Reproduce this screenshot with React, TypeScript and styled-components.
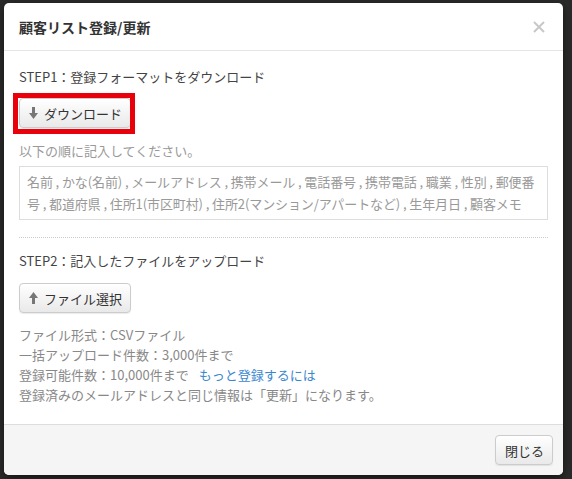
import React from 'react';
import styled, { createGlobalStyle } from 'styled-components';

const GlobalStyle = createGlobalStyle`
  html, body {
    margin: 0;
    padding: 0;
    background: #2a2a2a;
    font-family: "Noto Sans CJK JP", "Noto Sans", sans-serif;
  }
`;

// 背景（暗くした画面）
const Backdrop = styled.div`
  width: 572px;
  height: 479px;
  padding: 3px 9px 4px 4px;
  box-sizing: border-box;
  background: #2a2a2a;
`;

const Modal = styled.div`
  width: 559px;
  height: 472px;
  background: #fff;
  border-radius: 5px;
  overflow: hidden;
  display: flex;
  flex-direction: column;
  box-shadow: 0 3px 9px rgba(0, 0, 0, 0.5);
`;

const Header = styled.div`
  height: 48px;
  box-sizing: border-box;
  padding: 0 15px;
  display: flex;
  align-items: center;
  justify-content: space-between;
  border-bottom: 1px solid #e5e5e5;
`;

const Title = styled.h4`
  margin: 0;
  font-size: 14px;
  font-weight: bold;
  color: #333;
`;

const CloseX = styled.button`
  border: none;
  background: none;
  padding: 0;
  margin-right: 2px;
  width: 14px;
  height: 14px;
  cursor: pointer;
  display: flex;
`;

const Body = styled.div`
  flex: 1;
  padding: 16px 15px 0;
  font-size: 13px;
  line-height: 20px;
`;

const Step = styled.p`
  margin: 0;
  color: #444;
`;

const Btn = styled.button<{ $highlight?: boolean }>`
  position: relative;
  display: inline-flex;
  align-items: center;
  gap: 6px;
  height: 30px;
  padding: 0 8px 0 9px;
  font-family: inherit;
  font-size: 13px;
  color: #333;
  background: linear-gradient(#ffffff, #e9e9e9);
  border: 1px solid #ccc;
  border-radius: 4px;
  box-shadow: 0 1px 1px rgba(0, 0, 0, 0.08);
  cursor: pointer;

  /* 赤枠の注釈 */
  &::after {
    content: '';
    display: ${p => (p.$highlight ? 'block' : 'none')};
    position: absolute;
    top: -6px;
    left: -7px;
    right: -5px;
    bottom: -7px;
    border: 5px solid #e8000b;
  }
`;

const BtnRow = styled.div<{ $top: number }>`
  margin-top: ${p => p.$top}px;
  display: flex;
`;

const Note = styled.p<{ $top?: number }>`
  margin: ${p => p.$top ?? 0}px 0 0;
  color: #999;
`;

const FieldBox = styled.div`
  margin-top: 5px;
  border: 1px solid #ddd;
  padding: 4px 7px;
  line-height: 22px;
  color: #999;
  letter-spacing: -0.1px;
`;

const Divider = styled.hr`
  margin: 17px 0 13px;
  border: none;
  border-top: 1px dotted #ccc;
`;

const InfoList = styled.div`
  margin-top: 12px;
  color: #888;
`;

const Link = styled.a`
  color: #3b87cf;
  text-decoration: none;
  margin-left: 10px;
`;

const Footer = styled.div`
  height: 51px;
  box-sizing: border-box;
  background: #f5f5f5;
  border-top: 1px solid #ddd;
  padding: 0 10px;
  display: flex;
  align-items: center;
  justify-content: flex-end;
`;

const Arrow = ({ up }: { up?: boolean }) => (
  <svg width="9" height="12" viewBox="0 0 9 12" style={{ transform: up ? 'rotate(180deg)' : undefined }}>
    <rect x="3" y="0" width="3" height="7" fill="#777" />
    <polygon points="0,6 9,6 4.5,12" fill="#777" />
  </svg>
);

const fields =
  '名前 , かな(名前) , メールアドレス , 携帯メール , 電話番号 , 携帯電話 , 職業 , 性別 , 郵便番号 , 都道府県 , 住所1(市区町村) , 住所2(マンション/アパートなど) , 生年月日 , 顧客メモ';

const App: React.FC = () => (
  <>
    <GlobalStyle />
    <Backdrop>
      <Modal>
        <Header>
          <Title>顧客リスト登録/更新</Title>
          <CloseX aria-label="close">
            <svg width="14" height="14" viewBox="0 0 14 14">
              <path d="M2 2 L12 12 M12 2 L2 12" stroke="#c8c8c8" strokeWidth="2" />
            </svg>
          </CloseX>
        </Header>
        <Body>
          <Step>STEP1：登録フォーマットをダウンロード</Step>
          <BtnRow $top={11}>
            <Btn $highlight>
              <Arrow />
              ダウンロード
            </Btn>
          </BtnRow>
          <Note $top={13}>以下の順に記入してください。</Note>
          <FieldBox>{fields}</FieldBox>
          <Divider />
          <Step>STEP2：記入したファイルをアップロード</Step>
          <BtnRow $top={12}>
            <Btn>
              <Arrow up />
              ファイル選択
            </Btn>
          </BtnRow>
          <InfoList>
            <div>ファイル形式：CSVファイル</div>
            <div>一括アップロード件数：3,000件まで</div>
            <div>
              登録可能件数：10,000件まで
              <Link href="#">もっと登録するには</Link>
            </div>
            <div>登録済みのメールアドレスと同じ情報は「更新」になります。</div>
          </InfoList>
        </Body>
        <Footer>
          <Btn>閉じる</Btn>
        </Footer>
      </Modal>
    </Backdrop>
  </>
);

export default App;
